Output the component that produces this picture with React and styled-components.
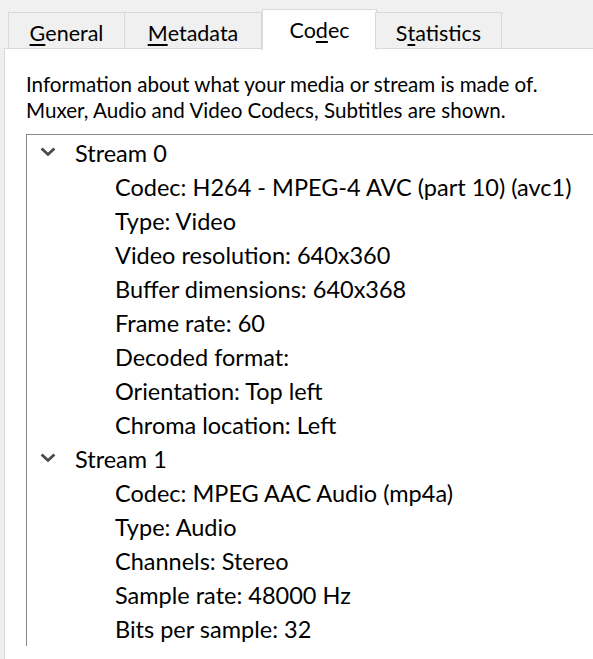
import React from 'react'
import styled, { createGlobalStyle } from 'styled-components'

const GlobalStyle = createGlobalStyle`
  html, body {
    margin: 0;
    padding: 0;
    background: #f0f0f0;
    overflow: hidden;
  }
  body {
    font-family: Lato, "Noto Sans", sans-serif;
    font-size: 20.6px;
    color: #000;
  }
`

const tabs = [
  { label: 'General', key: 'G', rest: 'eneral', width: 117 },
  { label: 'Metadata', key: 'M', rest: 'etadata', width: 138 },
  { label: 'Codec', pre: 'Co', key: 'd', rest: 'ec', width: 115, active: true },
  { label: 'Statistics', pre: 'S', key: 't', rest: 'atistics', width: 127 },
]

const streams = [
  {
    name: 'Stream 0',
    items: [
      'Codec: H264 - MPEG-4 AVC (part 10) (avc1)',
      'Type: Video',
      'Video resolution: 640x360',
      'Buffer dimensions: 640x368',
      'Frame rate: 60',
      'Decoded format:',
      'Orientation: Top left',
      'Chroma location: Left',
    ],
  },
  {
    name: 'Stream 1',
    items: [
      'Codec: MPEG AAC Audio (mp4a)',
      'Type: Audio',
      'Channels: Stereo',
      'Sample rate: 48000 Hz',
      'Bits per sample: 32',
    ],
  },
]

export default function App() {
  return (
    <Window>
      <GlobalStyle />
      <TabBar>
        {tabs.map(t => (
          <Tab key={t.label} $active={t.active} $width={t.width}>
            {t.pre}<u>{t.key}</u>{t.rest}
          </Tab>
        ))}
      </TabBar>
      <Panel>
        <Description>
          Information about what your media or stream is made of.<br />
          Muxer, Audio and Video Codecs, Subtitles are shown.
        </Description>
        <Tree>
          {streams.map(s => (
            <React.Fragment key={s.name}>
              <Row>
                <Chevron viewBox="0 0 16 9">
                  <path d="M1.6 1.4 L8 7.4 L14.4 1.4" fill="none" stroke="#4a4a4a" strokeWidth="2.8" />
                </Chevron>
                <RowText>{s.name}</RowText>
              </Row>
              {s.items.map(item => (
                <Row key={item} $child>
                  <RowText>{item}</RowText>
                </Row>
              ))}
            </React.Fragment>
          ))}
        </Tree>
      </Panel>
    </Window>
  )
}

const Window = styled.div`
  width: 593px;
  height: 659px;
  display: flex;
  flex-direction: column;
  padding-left: 4px;
  box-sizing: border-box;
`
const TabBar = styled.div`
  display: flex;
  align-items: flex-end;
  height: 49px;
  padding-left: 4px;
  position: relative;
  z-index: 1;
  font-size: 21.5px;
`
const Tab = styled.div`
  width: ${p => p.$width}px;
  height: ${p => (p.$active ? 41 : 37)}px;
  box-sizing: border-box;
  display: flex;
  align-items: center;
  justify-content: center;
  padding-top: ${p => (p.$active ? 0 : 4)}px;
  background: ${p => (p.$active ? '#fff' : '#f0f0f0')};
  border: 1px solid #d9d9d9;
  border-bottom: ${p => (p.$active ? 'none' : '1px solid #d9d9d9')};
  margin-left: ${p => (p.$active ? 0 : -1)}px;
  margin-right: ${p => (p.$active ? -1 : 0)}px;
  margin-bottom: ${p => (p.$active ? -1 : 0)}px;
  white-space: nowrap;
  &:first-child { margin-left: 0; }
  u {
    text-decoration-thickness: 2px;
    text-underline-offset: 3px;
  }
`
const Panel = styled.div`
  flex: 1;
  background: #fff;
  border-top: 1px solid #d9d9d9;
  border-left: 1px solid #d9d9d9;
  margin-top: -1px;
  padding: 22px 0 0 21px;
  overflow: hidden;
`
const Description = styled.div`
  line-height: 26px;
  margin-bottom: 11px;
  white-space: nowrap;
`
const Tree = styled.div`
  border-top: 1px solid #828790;
  border-left: 1px solid #828790;
  padding-top: 1px;
  font-size: 23.5px;
`
const Row = styled.div`
  height: 34px;
  display: flex;
  align-items: center;
  padding-left: ${p => (p.$child ? 88 : 13)}px;
  white-space: nowrap;
`
const Chevron = styled.svg`
  width: 16px;
  height: 9px;
  margin-right: 19px;
  margin-top: -3px;
  flex: none;
`
const RowText = styled.span``
